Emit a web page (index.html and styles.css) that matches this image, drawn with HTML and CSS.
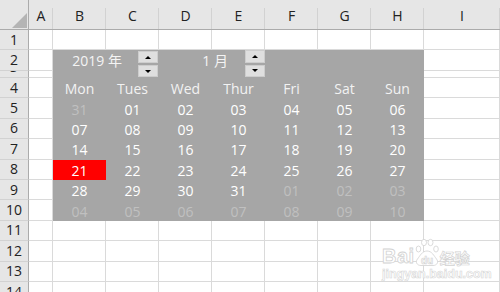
FILE: index.html
```html
<!DOCTYPE html>
<html lang="zh">
<head>
<meta charset="utf-8">
<title>Calendar</title>
<link rel="stylesheet" href="styles.css">
</head>
<body>
<div class="sheet">
  <div class="calendar">
    <div class="ctrl">
      <span class="lbl lbl-year">2019 年</span>
      <div class="spin"><span class="btn up"></span><span class="btn down"></span></div>
      <span class="lbl lbl-month">1 月</span>
      <div class="spin"><span class="btn up"></span><span class="btn down"></span></div>
    </div>
    <div class="days">
      <span class="wd">Mon</span><span class="wd">Tues</span><span class="wd">Wed</span><span class="wd">Thur</span><span class="wd">Fri</span><span class="wd">Sat</span><span class="wd">Sun</span>
      <span class="d dim">31</span><span class="d">01</span><span class="d">02</span><span class="d">03</span><span class="d">04</span><span class="d">05</span><span class="d">06</span>
      <span class="d">07</span><span class="d">08</span><span class="d">09</span><span class="d">10</span><span class="d">11</span><span class="d">12</span><span class="d">13</span>
      <span class="d">14</span><span class="d">15</span><span class="d">16</span><span class="d">17</span><span class="d">18</span><span class="d">19</span><span class="d">20</span>
      <span class="d today">21</span><span class="d">22</span><span class="d">23</span><span class="d">24</span><span class="d">25</span><span class="d">26</span><span class="d">27</span>
      <span class="d">28</span><span class="d">29</span><span class="d">30</span><span class="d">31</span><span class="d dim">01</span><span class="d dim">02</span><span class="d dim">03</span>
      <span class="d dim">04</span><span class="d dim">05</span><span class="d dim">06</span><span class="d dim">07</span><span class="d dim">08</span><span class="d dim">09</span><span class="d dim">10</span>
    </div>
  </div>

  <div class="corner"><span class="tri"></span></div>
  <div class="ch">A</div><div class="ch">B</div><div class="ch">C</div><div class="ch">D</div><div class="ch">E</div><div class="ch">F</div><div class="ch">G</div><div class="ch">H</div><div class="ch">I</div>

  <div class="rh">1</div><div class="c"></div><div class="c"></div><div class="c"></div><div class="c"></div><div class="c"></div><div class="c"></div><div class="c"></div><div class="c"></div><div class="c"></div>
  <div class="rh">2</div><div class="c"></div><div class="c"></div>
  <div class="rh r3"><span>3</span></div><div class="c"></div><div class="c"></div>
  <div class="rh">4</div><div class="c"></div><div class="c"></div>
  <div class="rh">5</div><div class="c"></div><div class="c"></div>
  <div class="rh">6</div><div class="c"></div><div class="c"></div>
  <div class="rh">7</div><div class="c"></div><div class="c"></div>
  <div class="rh">8</div><div class="c"></div><div class="c"></div>
  <div class="rh">9</div><div class="c"></div><div class="c"></div>
  <div class="rh">10</div><div class="c"></div><div class="c"></div>
  <div class="rh">11</div><div class="c"></div><div class="c"></div><div class="c"></div><div class="c"></div><div class="c"></div><div class="c"></div><div class="c"></div><div class="c"></div><div class="c"></div>
  <div class="rh">12</div><div class="c"></div><div class="c"></div><div class="c"></div><div class="c"></div><div class="c"></div><div class="c"></div><div class="c"></div><div class="c"></div><div class="c"></div>
  <div class="rh">13</div><div class="c"></div><div class="c"></div><div class="c"></div><div class="c"></div><div class="c"></div><div class="c"></div><div class="c"></div><div class="c"></div><div class="c"></div>
  <div class="rh">14</div><div class="c"></div><div class="c"></div><div class="c"></div><div class="c"></div><div class="c"></div><div class="c"></div><div class="c"></div><div class="c"></div><div class="c"></div>
</div>

<div class="watermark">
  <div class="wm-top">
    <span class="wm-bai">Bai</span>
    <svg class="wm-paw" width="24" height="28" viewBox="0 0 24 28">
      <ellipse cx="3.5" cy="11" rx="2.3" ry="3"/>
      <ellipse cx="9" cy="4.5" rx="2.5" ry="3.2"/>
      <ellipse cx="15.5" cy="4.5" rx="2.5" ry="3.2"/>
      <ellipse cx="21" cy="11" rx="2.3" ry="3"/>
      <path d="M12 13 C7 13 5 18 2.5 21 C0 24 2 27.5 6 27.5 L18 27.5 C22 27.5 24 24 21.5 21 C19 18 17 13 12 13 Z"/>
      <text x="12" y="25.5" text-anchor="middle">du</text>
    </svg>
    <span class="wm-jy">经验</span>
  </div>
  <div class="wm-url">jingyan.baidu.com</div>
</div>
</body>
</html>
```

FILE: styles.css
```css
html, body {
  margin: 0;
  padding: 0;
  background: #ffffff;
  overflow: hidden;
}

body {
  width: 500px;
  height: 292px;
  position: relative;
  font-family: "Open Sans", "Noto Sans CJK SC", sans-serif;
}

.sheet {
  display: grid;
  grid-template-columns: 29px 24px repeat(7, 53px) 76px;
  grid-template-rows: 30px 20px 20.5px 7.5px repeat(11, 20.4px);
  width: 500px;
}

.corner {
  background: #e6e6e6;
  border-right: 1px solid #ababab;
  border-bottom: 1px solid #ababab;
  box-sizing: border-box;
  display: flex;
  align-items: flex-end;
  justify-content: flex-end;
  padding: 0 1px 1px 0;
}

.tri {
  width: 15px;
  height: 15px;
  background: #b4b4b4;
  clip-path: polygon(100% 0, 100% 100%, 0 100%);
}

.ch {
  background: linear-gradient(#d2d2d2, #d2d2d2) right bottom / 1px 21px no-repeat, #e6e6e6;
  border-bottom: 1px solid #ababab;
  box-sizing: border-box;
  display: flex;
  align-items: center;
  justify-content: center;
  padding-top: 2px;
  font-size: 14px;
  color: #222;
}

.rh {
  background: #e6e6e6;
  border-right: 1px solid #ababab;
  border-bottom: 1px solid #d2d2d2;
  box-sizing: border-box;
  display: flex;
  align-items: center;
  justify-content: center;
  font-size: 14px;
  color: #222;
  overflow: hidden;
  line-height: 20px;
}

.r3 {
  align-items: flex-start;
}

.r3 span {
  margin-top: -14px;
}

.c {
  border-right: 1px solid #dadada;
  border-bottom: 1px solid #dadada;
  box-sizing: border-box;
}

.calendar {
  grid-column: 3 / 10;
  grid-row: 3 / 12;
  background: #a6a6a6;
  display: grid;
  grid-template-rows: 28px 1fr;
}

.ctrl {
  display: flex;
  align-items: flex-start;
}

.lbl {
  height: 20px;
  line-height: 21px;
  text-align: right;
  color: #f4f4f4;
  font-size: 14px;
  white-space: pre;
}

.lbl-year {
  width: 69px;
}

.lbl-month {
  width: 70px;
  margin-left: 0;
}

.spin {
  width: 20px;
  height: 26px;
  margin: 1px 0 0 16px;
  display: flex;
  flex-direction: column;
  gap: 2px;
}

.spin + .lbl-month {
  margin-left: 0;
}

.lbl-month + .spin {
  margin-left: 17px;
  margin-top: 0;
  height: 27px;
}

.btn {
  flex: 1;
  background: #dfdfdf;
  border: 1px solid #cdcdcd;
  display: flex;
  align-items: center;
  justify-content: center;
}

.btn::before {
  content: "";
  width: 0;
  height: 0;
  border-left: 3px solid transparent;
  border-right: 3px solid transparent;
}

.up::before {
  border-bottom: 3px solid #000;
}

.down::before {
  border-top: 3px solid #000;
}

.days {
  display: grid;
  grid-template-columns: repeat(7, 53px);
  grid-template-rows: repeat(7, 20.4px);
  font-size: 14px;
}

.wd, .d {
  display: flex;
  align-items: center;
  justify-content: center;
  padding-top: 1px;
}

.wd {
  color: #f2f2f2;
}

.d {
  color: #ffffff;
}

.d.dim {
  color: #c0c0c0;
}

.d.today {
  background: #ff0000;
}

.watermark {
  position: absolute;
  left: 382px;
  top: 236px;
  width: 95px;
  display: flex;
  flex-direction: column;
  align-items: flex-start;
  color: #ffffff;
}

.wm-top {
  display: flex;
  align-items: flex-end;
  height: 30px;
}

.wm-bai {
  font-family: "Liberation Sans", sans-serif;
  font-weight: bold;
  font-size: 20px;
  line-height: 20px;
  color: #fff;
  -webkit-text-stroke: 0.8px #d2d2d2;
  letter-spacing: 0.5px;
}

.wm-paw {
  margin: 0 1px 0 0;
  fill: #ffffff;
  stroke: #d2d2d2;
  stroke-width: 0.8;
}

.wm-paw text {
  font-family: "Liberation Sans", sans-serif;
  font-weight: bold;
  font-size: 10px;
  fill: #ffffff;
  stroke: #d2d2d2;
  stroke-width: 0.6;
}

.wm-jy {
  font-family: "Noto Sans CJK SC", sans-serif;
  font-weight: bold;
  font-size: 15px;
  line-height: 17px;
  color: #fff;
  -webkit-text-stroke: 0.7px #d2d2d2;
}

.wm-url {
  font-family: "Liberation Sans", sans-serif;
  font-weight: bold;
  font-size: 12.5px;
  line-height: 14px;
  margin-top: 1px;
  color: #fff;
  -webkit-text-stroke: 0.6px #d6d6d6;
}
```
